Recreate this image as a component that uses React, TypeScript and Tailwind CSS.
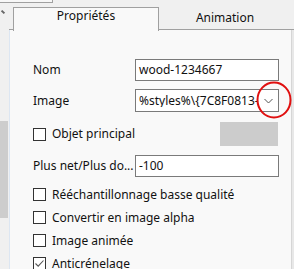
import { ReactNode } from 'react';

const font = { fontFamily: '"Noto Sans", "Open Sans", sans-serif' };

function Box({ checked }: { checked?: boolean }) {
  return (
    <div className="w-[13px] h-[13px] border border-[#333333] bg-white flex items-center justify-center shrink-0">
      {checked && (
        <svg width="11" height="11" viewBox="0 0 11 11">
          <path d="M1.5 5.5 L4.2 8.2 L9.5 2.5" fill="none" stroke="#555" strokeWidth="1.1" />
        </svg>
      )}
    </div>
  );
}

function CheckRow({ label, checked }: { label: string; checked?: boolean }) {
  return (
    <div className="h-[23px] flex items-center gap-[6px]">
      <Box checked={checked} />
      <span className="whitespace-nowrap">{label}</span>
    </div>
  );
}

function Field({ label, children, h = 'h-[22px]' }: { label: string; children: ReactNode; h?: string }) {
  return (
    <div className={`flex items-center ${h}`}>
      <span className="w-[102px] whitespace-nowrap">{label}</span>
      {children}
    </div>
  );
}

export default function App() {
  return (
    <div className="relative w-[294px] h-[269px] overflow-hidden flex bg-[#f0f0f0] text-[12px] text-[#111] leading-none" style={font}>
      {/* fragment of window above */}
      <div className="absolute left-0 top-0 w-[53px] h-[3px] bg-[#f7f7f7] border-b border-r border-[#a0a0a0]" />
      <div className="absolute left-[1px] top-[11px] w-[4px] h-[2px] bg-[#666] rotate-45" />

      {/* left strip with scrollbar thumb */}
      <div className="w-[9px] flex flex-col shrink-0">
        <div className="h-[121px]" />
        <div className="h-[97px] w-[8px] bg-[#cdcdcd]" />
      </div>

      {/* main */}
      <div className="w-[282px] flex flex-col shrink-0">
        {/* tabs */}
        <div className="h-[30px] flex items-end shrink-0">
          <div className="w-[4px] h-[1px] border-b border-[#a0a0a0] self-end" />
          <div className="w-[146px] h-[24px] bg-[#f9f9f9] border-l border-t border-r border-[#a0a0a0] flex items-center justify-center relative z-10 translate-y-[1px]">
            <span className="-mt-[10px] relative top-[1px]">Propriétés</span>
          </div>
          <div className="flex-1 h-[30px] border-b border-[#a0a0a0] flex items-center justify-center">
            <span className="mt-[6px]">Animation</span>
          </div>
        </div>

        {/* panel */}
        <div className="flex-1 bg-[#f9f9f9] border-l border-[#dce6f2] pl-[23px] pr-[12px] pt-[29px] flex flex-col">
          <Field label="Nom">
            <div className="w-[144px] h-[22px] border border-[#7a7a7a] bg-white flex items-center px-[3px]">
              wood-1234667
            </div>
          </Field>
          <div className="mt-[8px]">
            <Field label="Image" h="h-[23px]">
              <div className="w-[144px] h-[23px] border border-[#7a7a7a] bg-white flex items-center pl-[3px]">
                <span className="flex-1 overflow-hidden whitespace-nowrap">%styles%\{'{'}7C8F0813-1</span>
                <div className="w-[20px] h-full flex items-center justify-center shrink-0 bg-white">
                  <svg width="9" height="6" viewBox="0 0 9 6">
                    <path d="M0.5 1 L4.5 5 L8.5 1" fill="none" stroke="#555" strokeWidth="1" />
                  </svg>
                </div>
              </div>
            </Field>
          </div>
          <div className="mt-[10px] h-[24px] flex items-center">
            <div className="flex items-center gap-[6px] flex-1">
              <Box />
              <span>Objet principal</span>
            </div>
            <div className="w-[58px] h-[24px] bg-[#cccccc] mr-[1px]" />
          </div>
          <div className="mt-[9px]">
            <Field label="Plus net/Plus do...">
              <div className="w-[144px] h-[22px] border border-[#7a7a7a] bg-white flex items-center px-[3px]">
                -100
              </div>
            </Field>
          </div>
          <div className="mt-[6px] flex flex-col">
            <CheckRow label="Rééchantillonnage basse qualité" />
            <CheckRow label="Convertir en image alpha" />
            <CheckRow label="Image animée" />
            <CheckRow label="Anticrénelage" checked />
          </div>
        </div>
      </div>

      {/* right edge */}
      <div className="flex-1 flex flex-col">
        <div className="h-[30px] border-b border-[#a0a0a0]" />
        <div className="flex-1 border-l border-[#d6d6d6] bg-[#e8e8e8]" />
      </div>

      {/* red annotation circle */}
      <svg className="absolute left-[256px] top-[81px]" width="36" height="38" viewBox="0 0 36 38">
        <ellipse cx="18" cy="19" rx="16.5" ry="17.5" fill="none" stroke="#e01010" strokeWidth="2" />
      </svg>
    </div>
  );
}
